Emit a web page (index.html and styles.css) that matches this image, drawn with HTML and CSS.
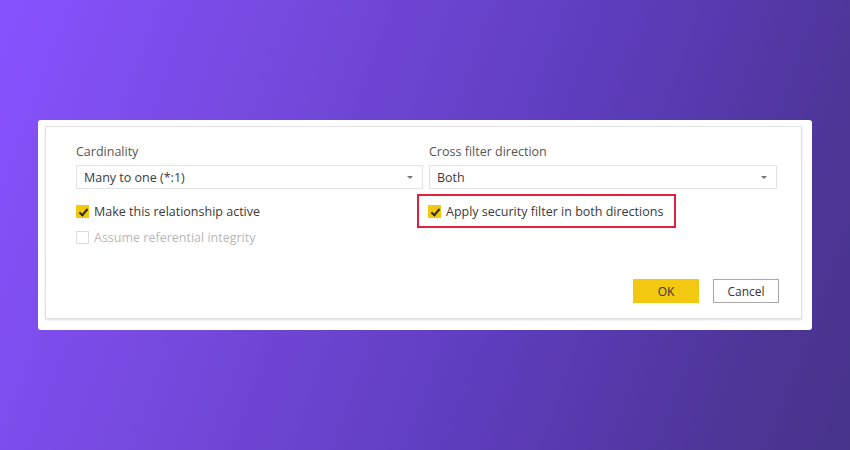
FILE: index.html
```html
<!DOCTYPE html>
<html lang="en">
<head>
    <meta charset="UTF-8">
    <title>Edit relationship</title>
    <link rel="stylesheet" href="styles.css">
</head>
<body>

    <div class="card">
        <div class="dialog">
            <div class="fields">
                <div class="field">
                    <label class="label">Cardinality</label>
                    <div class="select">
                        <span>Many to one (*:1)</span>
                        <span class="arrow"></span>
                    </div>
                    <div class="check">
                        <span class="box checked"></span>
                        <span>Make this relationship active</span>
                    </div>
                    <div class="check disabled">
                        <span class="box"></span>
                        <span>Assume referential integrity</span>
                    </div>
                </div>
                <div class="field">
                    <label class="label">Cross filter direction</label>
                    <div class="select">
                        <span>Both</span>
                        <span class="arrow"></span>
                    </div>
                    <div class="check highlight">
                        <span class="box checked"></span>
                        <span>Apply security filter in both directions</span>
                    </div>
                </div>
            </div>
            <div class="actions">
                <button class="btn primary">OK</button>
                <button class="btn">Cancel</button>
            </div>
        </div>
    </div>

</body>
</html>
```

FILE: styles.css
```css
body {
    margin: 0;
    height: 450px;
    padding: 120px 38px 0;
    box-sizing: border-box;
    font-family: 'Open Sans', 'Noto Sans', sans-serif;
    background: linear-gradient(110deg, #8852ff 0%, #7549dd 30%, #5d3dbc 62%, #4d3596 88%, #47338a 100%);
}

.card {
    background: #fff;
    border-radius: 3px;
    height: 210px;
    padding: 6px 10px 0 7px;
    box-sizing: border-box;
}

.dialog {
    border: 1px solid #e2e2e2;
    box-shadow: 0 1px 2px rgba(0, 0, 0, 0.12);
    padding: 16px 22px 15px 30px;
}

.fields {
    display: grid;
    grid-template-columns: 347px 348px;
    gap: 6px;
}

.label {
    display: block;
    font-size: 12.5px;
    line-height: 18px;
    color: #555;
    margin-bottom: 4px;
}

.select {
    height: 24px;
    border: 1px solid #e3e3e3;
    box-sizing: border-box;
    display: flex;
    align-items: center;
    justify-content: space-between;
    padding: 0 9px 0 7px;
    font-size: 12.5px;
    color: #3a3a3a;
}

/* little grey caret at the right of the dropdown */
.arrow {
    width: 0;
    height: 0;
    border-left: 3px solid transparent;
    border-right: 3px solid transparent;
    border-top: 3px solid #777;
}

.check {
    display: flex;
    align-items: center;
    gap: 5px;
    height: 26px;
    font-size: 12.5px;
    color: #3a3a3a;
}

.fields .field > .check:nth-child(3) {
    margin-top: 9px;
}

.box {
    width: 13px;
    height: 13px;
    box-sizing: border-box;
    border: 1px solid #d0d0d0;
    background: #fff;
    position: relative;
    flex-shrink: 0;
}

.box.checked {
    background: #f2c811;
    border-color: #f2c811;
}

.box.checked::after {
    content: "";
    position: absolute;
    left: 4px;
    top: 1px;
    width: 3px;
    height: 7px;
    border: solid #2b2b2b;
    border-width: 0 2px 2px 0;
    transform: rotate(40deg);
}

.check.disabled {
    color: #b8b8b8;
}

.check.disabled .box {
    border-color: #dcdcdc;
}

.fields .field > .check.highlight {
    margin: 5px 0 0 -12px;
    padding: 2px 11px 2px 9px;
    border: 2px solid #e0203f;
    width: max-content;
}

.actions {
    display: flex;
    justify-content: flex-end;
    gap: 14px;
    margin-top: 29px;
}

.btn {
    width: 66px;
    height: 24px;
    font-family: inherit;
    font-size: 12px;
    color: #333;
    background: #fff;
    border: 1px solid #a8a8a8;
    padding: 0;
}

.btn.primary {
    background: #f2c811;
    border-color: #f2c811;
}
```
